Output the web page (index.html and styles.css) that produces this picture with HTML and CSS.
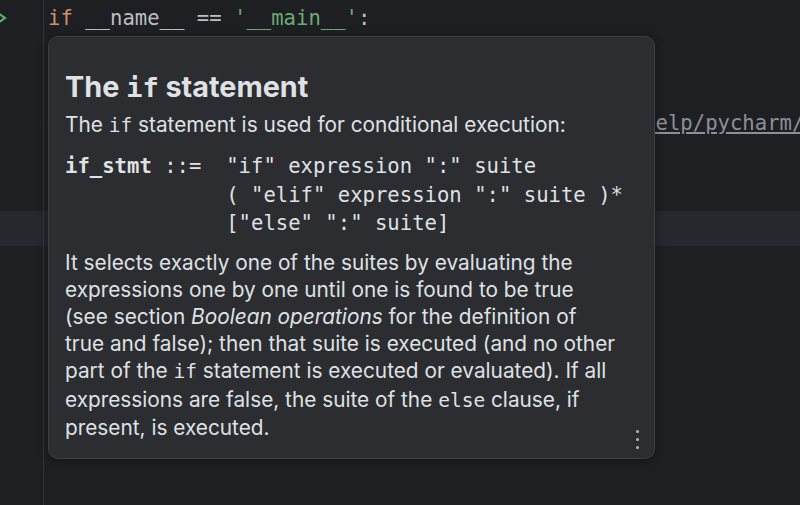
FILE: index.html
```html
<!DOCTYPE html>
<html>
<head>
<meta charset="utf-8">
<link rel="stylesheet" href="styles.css">
</head>
<body>
<div class="editor">
  <div class="row"><div class="gutter"><svg class="run" width="12" height="20" viewBox="0 0 12 20"><polyline points="-2,5 5,10 -2,15" fill="none" stroke="#5fb865" stroke-width="2"/></svg></div><div class="code"><span class="kw">if</span> __name__ == <span class="str">'__main__'</span>:</div></div>
  <div class="row"><div class="gutter"></div><div class="code">    print_hi(<span class="str">'PyCharm'</span>)</div></div>
  <div class="row"><div class="gutter"></div><div class="code"></div></div>
  <div class="row"><div class="gutter"></div><div class="code comment"># See PyCharm help at <span class="link">https://www.jetbrains.com/help/pycharm/</span></div></div>
  <div class="row"><div class="gutter"></div><div class="code"></div></div>
  <div class="row"><div class="gutter"></div><div class="code"></div></div>
  <div class="row current"><div class="gutter"></div><div class="code"></div></div>
  <div class="row"><div class="gutter"></div><div class="code"></div></div>
  <div class="row"><div class="gutter"></div><div class="code"></div></div>
  <div class="row"><div class="gutter"></div><div class="code"></div></div>
  <div class="row"><div class="gutter"></div><div class="code"></div></div>
  <div class="row"><div class="gutter"></div><div class="code"></div></div>
  <div class="row"><div class="gutter"></div><div class="code"></div></div>
  <div class="row"><div class="gutter"></div><div class="code"></div></div>
  <div class="row"><div class="gutter"></div><div class="code"></div></div>
</div>

<div class="popup">
  <h1 class="title">The <code class="tcode">if</code> statement</h1>
  <p class="lead">The <code class="icode">if</code> statement is used for conditional execution:</p>
  <pre class="grammar"><b>if_stmt</b> ::=  "if" expression ":" suite
             ( "elif" expression ":" suite )*
             ["else" ":" suite]</pre>
  <p class="body">It selects exactly one of the suites by evaluating the<br>expressions one by one until one is found to be true<br>(see section <em>Boolean operations</em> for the definition of<br>true and false); then that suite is executed (and no other<br>part of the <code class="icode">if</code> statement is executed or evaluated). If all<br>expressions are false, the suite of the <code class="icode">else</code> clause, if<br>present, is executed.</p>
  <div class="more"><span></span><span></span><span></span></div>
</div>
</body>
</html>
```
FILE: styles.css
```css
html, body {
  margin: 0;
  padding: 0;
  background: #1e1f22;
  width: 800px;
  height: 505px;
  overflow: hidden;
}

.editor {
  display: flex;
  flex-direction: column;
  font-family: "DejaVu Sans Mono", monospace;
  font-size: 20.6px;
  color: #bcbec4;
}

.row {
  display: flex;
  height: 35.2px;
  align-items: center;
}

.row.current {
  background: #26282e;
}

.gutter {
  width: 43px;
  height: 100%;
  border-right: 1px solid #313438;
  flex: none;
  display: flex;
  align-items: center;
}

.run {
  display: block;
}

.code {
  padding-left: 4px;
  white-space: pre;
}

.kw { color: #cf8e6d; }
.str { color: #6aab73; }
.comment { color: #7a7e85; }
.link { text-decoration: underline; color: #8c8f96; }

.popup {
  position: absolute;
  left: 48px;
  top: 36px;
  width: 573px;
  padding: 32px 16px 17px 16px;
  background: #2b2d30;
  border: 1px solid #3c3f44;
  border-radius: 10px;
  box-shadow: 0 2px 10px rgba(0,0,0,0.35);
  font-family: "Inter", "Noto Sans", sans-serif;
  color: #dfe1e5;
}

.title {
  margin: 0 0 5px 0;
  font-size: 28.8px;
  line-height: 36px;
  font-weight: 700;
}

.tcode {
  font-family: "DejaVu Sans Mono", monospace;
  font-weight: 700;
  font-size: 27px;
}

.lead {
  margin: 0;
  font-size: 20.8px;
  line-height: 27px;
  white-space: nowrap;
}

.icode {
  font-family: "DejaVu Sans Mono", monospace;
  font-size: 19.5px;
}

.grammar {
  margin: 13px 0 11px 0;
  font-family: "DejaVu Sans Mono", monospace;
  font-size: 20.6px;
  line-height: 28.5px;
  color: #dfe1e5;
}

.body {
  margin: 0;
  font-size: 20.8px;
  line-height: 27.2px;
  white-space: nowrap;
}

.more {
  position: absolute;
  right: 15px;
  bottom: 9px;
  display: flex;
  flex-direction: column;
  gap: 5px;
}

.more span {
  width: 3px;
  height: 3px;
  border-radius: 50%;
  background: #b4b7bd;
}
```
